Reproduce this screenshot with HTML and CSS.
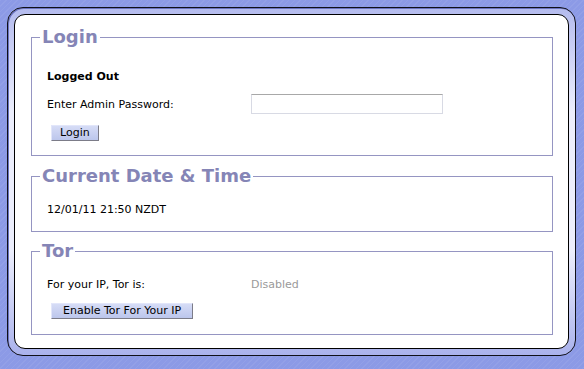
FILE: index.html
```html
<!DOCTYPE html>
<html>
<head>
<meta charset="utf-8">
<link rel="stylesheet" href="styles.css">
</head>
<body>
<div class="frame">
  <div class="panel">
    <fieldset class="box box-login">
      <legend>Login</legend>
      <p class="status">Logged Out</p>
      <div class="row">
        <span class="label">Enter Admin Password:</span>
        <input class="pw" type="password">
      </div>
      <button class="btn">Login</button>
    </fieldset>
    <fieldset class="box box-date">
      <legend>Current Date &amp; Time</legend>
      <p class="text">12/01/11 21:50 NZDT</p>
    </fieldset>
    <fieldset class="box box-tor">
      <legend>Tor</legend>
      <div class="row">
        <span class="label">For your IP, Tor is:</span>
        <span class="muted">Disabled</span>
      </div>
      <button class="btn">Enable Tor For Your IP</button>
    </fieldset>
  </div>
</div>
</body>
</html>
```

FILE: styles.css
```css
html, body {
  margin: 0;
  padding: 0;
}
body {
  width: 584px;
  height: 369px;
  overflow: hidden;
  background-color: #8c9ae6;
  background-image: repeating-linear-gradient(135deg, rgba(255,255,255,0.06) 0px, rgba(255,255,255,0.06) 1px, rgba(0,0,0,0) 1px, rgba(0,0,0,0) 4px);
  font-family: "DejaVu Sans", Verdana, sans-serif;
  font-size: 11px;
  color: #000;
}
.frame {
  margin: 7px 8px 0 7px;
  height: 349px;
  box-sizing: border-box;
  border: 1px solid #101018;
  border-radius: 16px;
  padding: 6px;
  background: linear-gradient(180deg, #b4bbee 0%, #eceefc 30%, #eceefc 70%, #aab2ec 100%);
  box-shadow: inset 1px 1px 0 #6a72c0;
}
.panel {
  height: 100%;
  box-sizing: border-box;
  border: 1px solid #000;
  border-radius: 11px;
  background: #fff;
  padding: 12px 15px 0 16px;
  display: flex;
  flex-direction: column;
}
.box {
  margin: 0;
  border: 1px solid #9595c2;
  padding: 0 0 0 15px;
}
.box-date { margin-top: 10px; }
.box-tor { margin-top: 9px; }
.box legend {
  font-weight: bold;
  font-size: 18px;
  color: #8585b6;
  padding: 0 2px;
  margin-left: -7px;
  line-height: 20px;
}
.status {
  margin: 0;
  font-weight: bold;
  padding-top: 23px;
  line-height: 14px;
}
.text {
  margin: 0;
  padding-top: 17px;
  padding-bottom: 14px;
  line-height: 14px;
}
.row {
  display: flex;
  align-items: center;
}
.box-login .row { margin-top: 10px; height: 20px; }
.box-tor .row { margin-top: 16px; height: 14px; }
.label {
  width: 204px;
}
.muted {
  color: #9a9a9a;
}
.pw {
  width: 192px;
  height: 20px;
  box-sizing: border-box;
  border: 1px solid #d8dae4;
  border-top-color: #a8a8a8;
  padding: 0;
  margin: 0;
  background: #fff;
}
.btn {
  display: block;
  margin: 11px 0 14px 4px;
  height: 16px;
  padding: 0 8px;
  font-family: "DejaVu Sans", Verdana, sans-serif;
  font-size: 11px;
  color: #000;
  line-height: 14px;
  background: linear-gradient(180deg, #d6dcf6 0%, #bcc6ec 100%);
  border: 1px solid;
  border-color: #e2e6fa #7c7c88 #7c7c88 #e2e6fa;
  border-radius: 0;
}
.box-tor .btn {
  margin-top: 12px;
  margin-bottom: 15px;
  padding: 0 11px;
}
```
